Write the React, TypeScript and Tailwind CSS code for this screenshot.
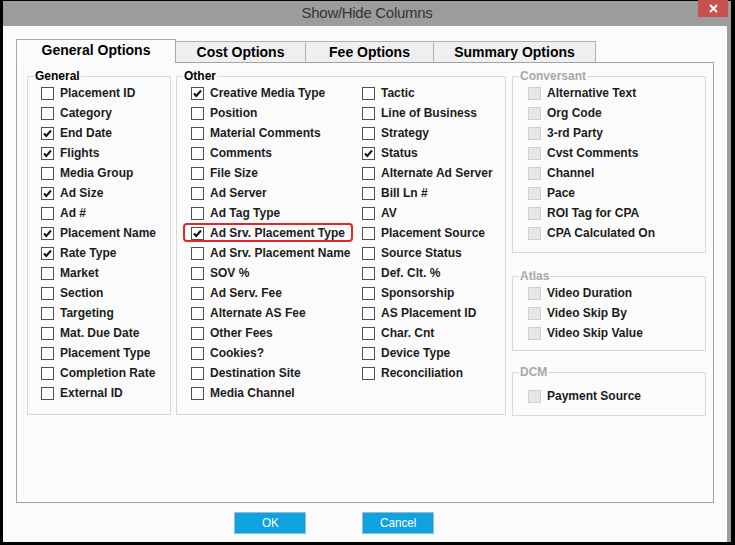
const generalItems = [
  { label: 'Placement ID', checked: false },
  { label: 'Category', checked: false },
  { label: 'End Date', checked: true },
  { label: 'Flights', checked: true },
  { label: 'Media Group', checked: false },
  { label: 'Ad Size', checked: true },
  { label: 'Ad #', checked: false },
  { label: 'Placement Name', checked: true },
  { label: 'Rate Type', checked: true },
  { label: 'Market', checked: false },
  { label: 'Section', checked: false },
  { label: 'Targeting', checked: false },
  { label: 'Mat. Due Date', checked: false },
  { label: 'Placement Type', checked: false },
  { label: 'Completion Rate', checked: false },
  { label: 'External ID', checked: false },
]

const otherLeft = [
  { label: 'Creative Media Type', checked: true },
  { label: 'Position', checked: false },
  { label: 'Material Comments', checked: false },
  { label: 'Comments', checked: false },
  { label: 'File Size', checked: false },
  { label: 'Ad Server', checked: false },
  { label: 'Ad Tag Type', checked: false },
  { label: 'Ad Srv. Placement Type', checked: true, highlight: true },
  { label: 'Ad Srv. Placement Name', checked: false },
  { label: 'SOV %', checked: false },
  { label: 'Ad Serv. Fee', checked: false },
  { label: 'Alternate AS Fee', checked: false },
  { label: 'Other Fees', checked: false },
  { label: 'Cookies?', checked: false },
  { label: 'Destination Site', checked: false },
  { label: 'Media Channel', checked: false },
]

const otherRight = [
  { label: 'Tactic', checked: false },
  { label: 'Line of Business', checked: false },
  { label: 'Strategy', checked: false },
  { label: 'Status', checked: true },
  { label: 'Alternate Ad Server', checked: false },
  { label: 'Bill Ln #', checked: false },
  { label: 'AV', checked: false },
  { label: 'Placement Source', checked: false },
  { label: 'Source Status', checked: false },
  { label: 'Def. Clt. %', checked: false },
  { label: 'Sponsorship', checked: false },
  { label: 'AS Placement ID', checked: false },
  { label: 'Char. Cnt', checked: false },
  { label: 'Device Type', checked: false },
  { label: 'Reconciliation', checked: false },
]

const conversantItems = ['Alternative Text', 'Org Code', '3-rd Party', 'Cvst Comments', 'Channel', 'Pace', 'ROI Tag for CPA', 'CPA Calculated On']
const atlasItems = ['Video Duration', 'Video Skip By', 'Video Skip Value']
const dcmItems = ['Payment Source']

const tabs = [
  { label: 'Cost Options', w: 'w-[130px]' },
  { label: 'Fee Options', w: 'w-[128px]' },
  { label: 'Summary Options', w: 'w-[162px]' },
]

type Item = { label: string; checked?: boolean; highlight?: boolean }

function CheckRow({ item, disabled = false }: { item: Item; disabled?: boolean }) {
  return (
    <div className="relative flex items-center h-[20px]">
      {/* red callout around the row */}
      {item.highlight && (
        <div className="absolute top-[0px] -left-[8px] w-[170px] h-[19px] border-2 border-[#e0262b] rounded-[4px]" />
      )}
      <div
        className={
          disabled
            ? 'w-[13px] h-[13px] shrink-0 border border-[#cfcfcf] bg-[#e6e6e6]'
            : 'w-[13px] h-[13px] shrink-0 border border-[#505050] bg-white flex items-center justify-center'
        }
      >
        {item.checked && (
          <svg width="11" height="11" viewBox="0 0 11 11" fill="none">
            <path d="M2 5.5 L4.3 8 L9 2.5" stroke="#111" strokeWidth="2" strokeLinejoin="miter" />
          </svg>
        )}
      </div>
      <span className="ml-[6px] text-[12px] font-bold text-[#1c1c1c] whitespace-nowrap leading-none">{item.label}</span>
    </div>
  )
}

function GroupBox({
  title,
  disabled = false,
  className,
  children,
}: {
  title: string
  disabled?: boolean
  className: string
  children: React.ReactNode
}) {
  return (
    <div className={'relative border border-[#d9d9d9] ' + className}>
      <span
        className={
          'absolute -top-[8px] left-[6px] px-[1px] bg-[#fbfbfb] text-[12px] font-bold leading-[14px] ' +
          (disabled ? 'text-[#a8a8a8]' : 'text-black')
        }
      >
        {title}
      </span>
      {children}
    </div>
  )
}

export default function App() {
  return (
    <div
      className="w-[735px] h-[545px] bg-black pl-[3px] pt-[1px] pr-[4px] pb-[3px] overflow-hidden"
      style={{ fontFamily: '"Liberation Sans", Arial, sans-serif' }}
    >
      <div className="flex flex-col h-full bg-[#9c9c9c] pr-[4px]">
        {/* Title bar */}
        <div className="relative h-[25px] shrink-0 flex items-center justify-center -mr-[4px]">
          <span className="text-[15px] tracking-[-0.3px] text-[#333]">Show/Hide Columns</span>
          <div className="absolute top-[-1px] right-[3px] w-[30px] h-[17px] bg-[#c75050] flex items-center justify-center">
            <svg width="9" height="9" viewBox="0 0 9 9">
              <path d="M1 1 L8 8 M8 1 L1 8" stroke="#fff" strokeWidth="2" />
            </svg>
          </div>
        </div>

        {/* Dialog body */}
        <div className="flex-1 bg-[#fbfbfb] pt-[13px] px-[13px] flex flex-col">
          {/* Tabs */}
          <div className="flex items-end h-[23px]">
            <div className="relative z-10 w-[160px] h-[24px] -mb-[1px] bg-[#fbfbfb] border-t border-l border-r border-[#a9a9a9] flex items-center justify-center pb-[2px]">
              <span className="text-[14px] font-bold text-black">General Options</span>
            </div>
            {tabs.map((t) => (
              <div
                key={t.label}
                className={t.w + ' h-[21px] bg-[#efefef] border-t border-r border-[#b0b0b0] flex items-center justify-center'}
              >
                <span className="text-[14px] font-bold text-black">{t.label}</span>
              </div>
            ))}
          </div>

          {/* Tab panel */}
          <div className="h-[441px] border border-[#a3a3a3] bg-[#fbfbfb] pt-[13px] pl-[10px] flex">
            <GroupBox title="General" className="w-[144px] h-[339px] pt-[6px] pl-[13px]">
              {generalItems.map((it) => (
                <CheckRow key={it.label} item={it} />
              ))}
            </GroupBox>

            <GroupBox title="Other" className="ml-[5px] w-[330px] h-[339px] pt-[6px] pl-[14px] flex">
              <div className="w-[171px]">
                {otherLeft.map((it) => (
                  <CheckRow key={it.label} item={it} />
                ))}
              </div>
              <div>
                {otherRight.map((it) => (
                  <CheckRow key={it.label} item={it} />
                ))}
              </div>
            </GroupBox>

            <div className="ml-[6px] w-[194px] flex flex-col">
              <GroupBox title="Conversant" disabled className="h-[177px] pt-[6px] pl-[15px]">
                {conversantItems.map((l) => (
                  <CheckRow key={l} item={{ label: l }} disabled />
                ))}
              </GroupBox>
              <GroupBox title="Atlas" disabled className="mt-[23px] h-[75px] pt-[6px] pl-[15px]">
                {atlasItems.map((l) => (
                  <CheckRow key={l} item={{ label: l }} disabled />
                ))}
              </GroupBox>
              <GroupBox title="DCM" disabled className="mt-[21px] h-[44px] pt-[13px] pl-[15px]">
                {dcmItems.map((l) => (
                  <CheckRow key={l} item={{ label: l }} disabled />
                ))}
              </GroupBox>
            </div>
          </div>

          {/* Buttons */}
          <div className="flex mt-[9px] pl-[218px]">
            <button className="w-[72px] h-[22px] bg-[#0fa2e0] border border-[#9fb8c6] text-white text-[13px] flex items-center justify-center">
              <span className="inline-block scale-x-90">OK</span>
            </button>
            <button className="ml-[56px] w-[72px] h-[22px] bg-[#0fa2e0] border border-[#9fb8c6] text-white text-[13px] flex items-center justify-center">
              <span className="inline-block scale-x-90">Cancel</span>
            </button>
          </div>
        </div>
      </div>
    </div>
  )
}
